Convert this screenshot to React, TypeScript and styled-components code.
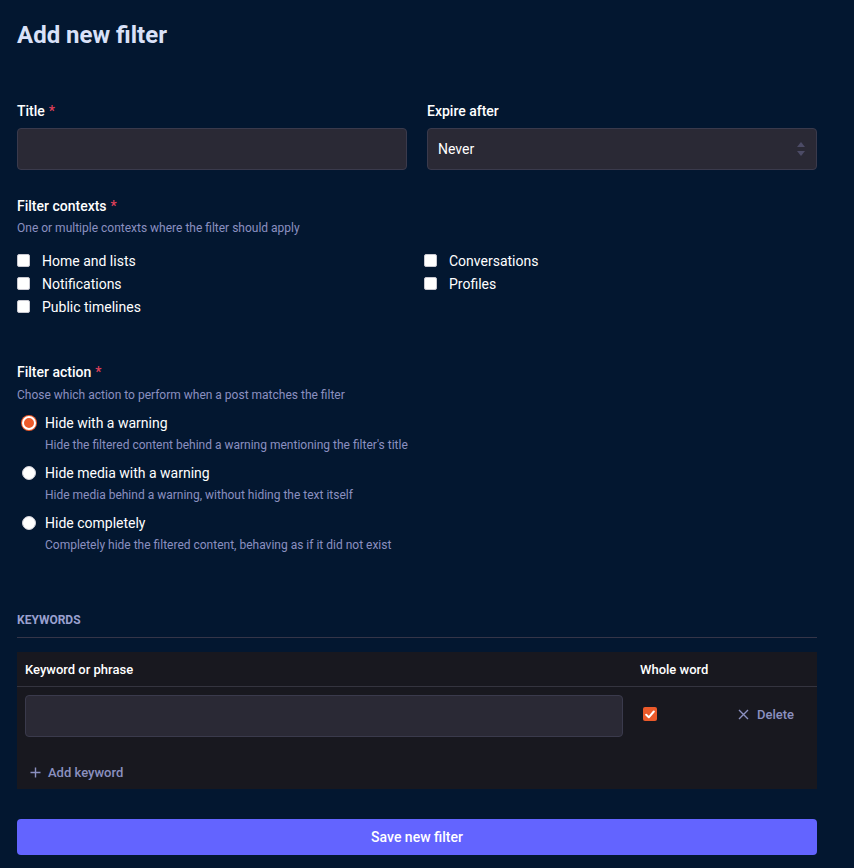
import React from "react";
import styled, { createGlobalStyle } from "styled-components";

const Global = createGlobalStyle`
  html, body { margin: 0; padding: 0; background: #031730; }
  body { font-family: Roboto, "Noto Sans", "Liberation Sans", sans-serif; color: #fff; }
  * { box-sizing: border-box; }
`;

const Page = styled.div`
  width: 800px;
  margin-left: 17px;
  padding-top: 21px;
  padding-bottom: 13px;
`;

const Heading = styled.h1`
  margin: 0 0 52px;
  font-size: 24px;
  line-height: 28px;
  font-weight: 700;
  color: #d9e1f8;
`;

const TwoCols = styled.div`
  display: grid;
  grid-template-columns: 390px 390px;
  column-gap: 20px;
`;

const Field = styled.div`
  display: flex;
  flex-direction: column;
`;

const Label = styled.div<{ $mb?: number }>`
  font-size: 14px;
  line-height: 20px;
  font-weight: 500;
  color: #fff;
  margin-bottom: ${(p) => p.$mb ?? 4}px;
`;

const Req = styled.span`
  color: #df405a;
  margin-left: 4px;
`;

const Hint = styled.div`
  font-size: 12px;
  line-height: 16px;
  color: #8b90c0;
`;

const TextInput = styled.div`
  height: 42px;
  background: #2a2935;
  border: 1px solid #3a3a4c;
  border-radius: 4px;
`;

const Select = styled.div`
  height: 42px;
  background: #2a2935;
  border: 1px solid #3a3a4c;
  border-radius: 4px;
  display: flex;
  align-items: center;
  justify-content: space-between;
  padding: 0 10px 0 10px;
  font-size: 14px;
  color: #fff;
`;

const Section = styled.div<{ $mt: number }>`
  margin-top: ${(p) => p.$mt}px;
`;

const CheckGrid = styled.div`
  margin-top: 13px;
  display: grid;
  grid-template-columns: 407px 393px;
`;

const CheckRow = styled.label`
  display: flex;
  align-items: center;
  height: 23px;
  font-size: 14px;
  color: #fff;
  gap: 12px;
`;

const Box = styled.span`
  width: 13px;
  height: 13px;
  background: #fff;
  border-radius: 2px;
  border: 1px solid #c8c8d0;
  flex: none;
`;

const Options = styled.div`
  margin-top: 10px;
  display: flex;
  flex-direction: column;
  gap: 10px;
  padding-left: 5px;
`;

const Option = styled.div`
  display: grid;
  grid-template-columns: 14px 1fr;
  column-gap: 9px;
  row-gap: 4px;
  align-items: center;
`;

const Radio = styled.span<{ $on?: boolean }>`
  width: 14px;
  height: 14px;
  border-radius: 50%;
  background: ${(p) => (p.$on ? "#ec5a2a" : "#fff")};
  border: ${(p) => (p.$on ? "2px solid #fff" : "1px solid #d0d0d8")};
  box-shadow: ${(p) => (p.$on ? "0 0 0 1px #ec5a2a" : "none")};
`;

const OptLabel = styled.div`
  font-size: 14px;
  line-height: 20px;
  color: #fff;
`;

const OptHint = styled(Hint)`
  grid-column: 2;
`;

const SectionTitle = styled.div`
  margin-top: 59px;
  font-size: 12px;
  line-height: 16px;
  font-weight: 700;
  text-transform: uppercase;
  color: #9aa0cf;
  padding-bottom: 9px;
  border-bottom: 1px solid #353548;
`;

const Table = styled.div`
  margin-top: 14px;
  background: #18181f;
  padding-bottom: 11px;
`;

const KwGrid = styled.div`
  display: grid;
  grid-template-columns: 598px 81px 1fr;
  column-gap: 17px;
  align-items: center;
  padding: 0 8px;
`;

const HeadRow = styled(KwGrid)`
  height: 35px;
  border-bottom: 1px solid #34343f;
  font-size: 13px;
  font-weight: 500;
  color: #fff;
`;

const BodyRow = styled(KwGrid)`
  padding-top: 8px;
  padding-bottom: 8px;
`;

const OrangeCheck = styled.span`
  width: 14px;
  height: 14px;
  border-radius: 2px;
  background: #ec5a2a;
  display: flex;
  align-items: center;
  justify-content: center;
  margin: 0 0 4px 3px;
`;

const LinkBtn = styled.span<{ $gap?: number }>`
  display: inline-flex;
  align-items: center;
  gap: ${(p) => p.$gap ?? 8}px;
  font-size: 13px;
  font-weight: 500;
  color: #8b90c0;
  white-space: nowrap;
`;

const DeleteCell = styled.div`
  display: flex;
  justify-content: flex-start;
  margin-bottom: 4px;
`;

const AddRow = styled.div`
  padding: 18px 13px 0;
  height: 33px;
`;

const Button = styled.button`
  display: block;
  margin-top: 30px;
  width: 100%;
  height: 36px;
  border: 0;
  border-radius: 4px;
  background: #6364ff;
  color: #fff;
  font-family: inherit;
  font-size: 14px;
  font-weight: 500;
`;

const Arrows = () => (
  <svg width="10" height="16" viewBox="0 0 10 16">
    <path d="M5 1 L9 6 H1 Z" fill="#4c4b66" />
    <path d="M5 15 L9 10 H1 Z" fill="#4c4b66" />
  </svg>
);

const Check = () => (
  <svg width="10" height="9" viewBox="0 0 10 9">
    <path d="M1.2 4.8 L3.8 7.3 L8.8 1.5" stroke="#fff" strokeWidth="2" fill="none" strokeLinecap="round" strokeLinejoin="round" />
  </svg>
);

const Cross = () => (
  <svg width="11" height="11" viewBox="0 0 11 11">
    <path d="M1 1 L10 10 M10 1 L1 10" stroke="#8b90c0" strokeWidth="1.4" />
  </svg>
);

const Plus = () => (
  <svg width="11" height="11" viewBox="0 0 11 11">
    <path d="M5.5 0.5 V10.5 M0.5 5.5 H10.5" stroke="#8b90c0" strokeWidth="1.4" />
  </svg>
);

export default function App() {
  return (
    <>
      <Global />
      <Page>
        <Heading>Add new filter</Heading>
        <TwoCols>
          <Field>
            <Label $mb={7}>
              Title<Req>*</Req>
            </Label>
            <TextInput />
          </Field>
          <Field>
            <Label $mb={7}>Expire after</Label>
            <Select>
              <span>Never</span>
              <Arrows />
            </Select>
          </Field>
        </TwoCols>

        <Section $mt={26}>
          <Label>
            Filter contexts<Req>*</Req>
          </Label>
          <Hint>One or multiple contexts where the filter should apply</Hint>
          <CheckGrid>
            <CheckRow><Box />Home and lists</CheckRow>
            <CheckRow><Box />Conversations</CheckRow>
            <CheckRow><Box />Notifications</CheckRow>
            <CheckRow><Box />Profiles</CheckRow>
            <CheckRow><Box />Public timelines</CheckRow>
          </CheckGrid>
        </Section>

        <Section $mt={44}>
          <Label $mb={5}>
            Filter action<Req>*</Req>
          </Label>
          <Hint>Chose which action to perform when a post matches the filter</Hint>
          <Options>
            <Option>
              <Radio $on />
              <OptLabel>Hide with a warning</OptLabel>
              <OptHint>Hide the filtered content behind a warning mentioning the filter's title</OptHint>
            </Option>
            <Option>
              <Radio />
              <OptLabel>Hide media with a warning</OptLabel>
              <OptHint>Hide media behind a warning, without hiding the text itself</OptHint>
            </Option>
            <Option>
              <Radio />
              <OptLabel>Hide completely</OptLabel>
              <OptHint>Completely hide the filtered content, behaving as if it did not exist</OptHint>
            </Option>
          </Options>
        </Section>

        <SectionTitle>Keywords</SectionTitle>
        <Table>
          <HeadRow>
            <div>Keyword or phrase</div>
            <div>Whole word</div>
            <div />
          </HeadRow>
          <BodyRow>
            <TextInput />
            <OrangeCheck><Check /></OrangeCheck>
            <DeleteCell>
              <LinkBtn><Cross />Delete</LinkBtn>
            </DeleteCell>
          </BodyRow>
          <AddRow>
            <LinkBtn $gap={7}><Plus />Add keyword</LinkBtn>
          </AddRow>
        </Table>
        <Button>Save new filter</Button>
      </Page>
    </>
  );
}
